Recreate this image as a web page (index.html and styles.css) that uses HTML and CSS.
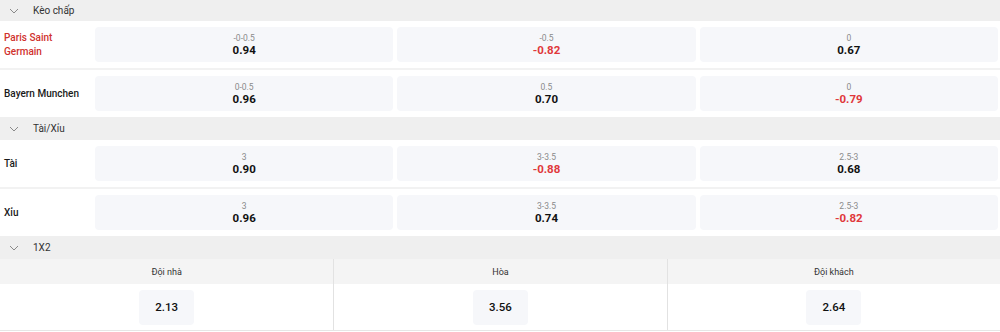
FILE: index.html
```html
<!DOCTYPE html>
<html lang="vi">
<head>
<meta charset="utf-8">
<link rel="stylesheet" href="styles.css">
</head>
<body>
<div class="market">
  <div class="sec-head">
    <svg class="chev" width="10" height="6" viewBox="0 0 10 6"><path d="M1 1 L5 5 L9 1" fill="none" stroke="#8a8a8a" stroke-width="1"/></svg>
    <span class="sec-title">Kèo chấp</span>
  </div>
  <div class="row">
    <div class="team red">Paris Saint<br>Germain</div>
    <div class="cells">
      <div class="cell"><span class="line">-0-0.5</span><span class="odd">0.94</span></div>
      <div class="cell"><span class="line">-0.5</span><span class="odd neg">-0.82</span></div>
      <div class="cell"><span class="line">0</span><span class="odd">0.67</span></div>
    </div>
  </div>
  <div class="row last">
    <div class="team">Bayern Munchen</div>
    <div class="cells">
      <div class="cell"><span class="line">0-0.5</span><span class="odd">0.96</span></div>
      <div class="cell"><span class="line">0.5</span><span class="odd">0.70</span></div>
      <div class="cell"><span class="line">0</span><span class="odd neg">-0.79</span></div>
    </div>
  </div>
</div>

<div class="market">
  <div class="sec-head">
    <svg class="chev" width="10" height="6" viewBox="0 0 10 6"><path d="M1 1 L5 5 L9 1" fill="none" stroke="#8a8a8a" stroke-width="1"/></svg>
    <span class="sec-title">Tài/Xỉu</span>
  </div>
  <div class="row">
    <div class="team">Tài</div>
    <div class="cells">
      <div class="cell"><span class="line">3</span><span class="odd">0.90</span></div>
      <div class="cell"><span class="line">3-3.5</span><span class="odd neg">-0.88</span></div>
      <div class="cell"><span class="line">2.5-3</span><span class="odd">0.68</span></div>
    </div>
  </div>
  <div class="row last">
    <div class="team">Xỉu</div>
    <div class="cells">
      <div class="cell"><span class="line">3</span><span class="odd">0.96</span></div>
      <div class="cell"><span class="line">3-3.5</span><span class="odd">0.74</span></div>
      <div class="cell"><span class="line">2.5-3</span><span class="odd neg">-0.82</span></div>
    </div>
  </div>
</div>

<div class="market">
  <div class="sec-head">
    <svg class="chev" width="10" height="6" viewBox="0 0 10 6"><path d="M1 1 L5 5 L9 1" fill="none" stroke="#8a8a8a" stroke-width="1"/></svg>
    <span class="sec-title">1X2</span>
  </div>
  <div class="x12">
    <div class="x12-col">
      <div class="x12-head">Đội nhà</div>
      <div class="x12-body"><div class="x12-cell">2.13</div></div>
    </div>
    <div class="x12-col">
      <div class="x12-head">Hòa</div>
      <div class="x12-body"><div class="x12-cell">3.56</div></div>
    </div>
    <div class="x12-col">
      <div class="x12-head">Đội khách</div>
      <div class="x12-body"><div class="x12-cell">2.64</div></div>
    </div>
  </div>
</div>
</body>
</html>
```

FILE: styles.css
```css
* { box-sizing: border-box; }
html, body { margin: 0; padding: 0; background: #fff; }
body {
  font-family: Roboto, "Noto Sans", Arial, sans-serif;
  color: #1a1a1a;
  width: 1000px;
}
.sec-head {
  height: 23px;
  background: #efefef;
  display: flex;
  align-items: center;
  padding-left: 9px;
}
.market:first-child .sec-head { height: 21px; }
.chev { display: block; margin-top: 1px; }
.sec-title {
  margin-left: 14px;
  font-size: 10px;
  color: #333;
}
.row {
  display: flex;
  align-items: center;
  padding: 6px 2px 6px 4px;
  border-bottom: 2px solid #f2f2f2;
}
.row.last { border-bottom: none; }
.team {
  width: 91px;
  font-size: 10px;
  font-weight: 500;
  line-height: 14px;
  color: #1a1a1a;
}
.team.red { color: #d0312d; }
.cells {
  flex: 1;
  display: grid;
  grid-template-columns: repeat(3, 1fr);
  gap: 4px;
}
.cell {
  height: 35px;
  background: #f6f7fa;
  border-radius: 4px;
  display: flex;
  flex-direction: column;
  align-items: center;
  justify-content: center;
}
.line {
  font-size: 8.5px;
  color: #8a8a8a;
  line-height: 10px;
}
.odd {
  font-size: 11.5px;
  font-weight: 700;
  line-height: 14px;
  color: #111;
}
.odd.neg { color: #e0383b; }
.x12 {
  display: grid;
  grid-template-columns: 1fr 1fr 1fr;
  border-bottom: 1px solid #e6e6e6;
}
.x12-col + .x12-col { border-left: 1px solid #e2e2e2; }
.x12-head {
  height: 25px;
  background: #f4f4f4;
  display: flex;
  align-items: center;
  justify-content: center;
  font-size: 9px;
  color: #333;
}
.x12-body {
  height: 46px;
  display: flex;
  align-items: center;
  justify-content: center;
}
.x12-cell {
  width: 55px;
  height: 35px;
  background: #f6f7fa;
  border-radius: 4px;
  display: flex;
  align-items: center;
  justify-content: center;
  font-size: 11.5px;
  font-weight: 500;
  color: #111;
}
```
